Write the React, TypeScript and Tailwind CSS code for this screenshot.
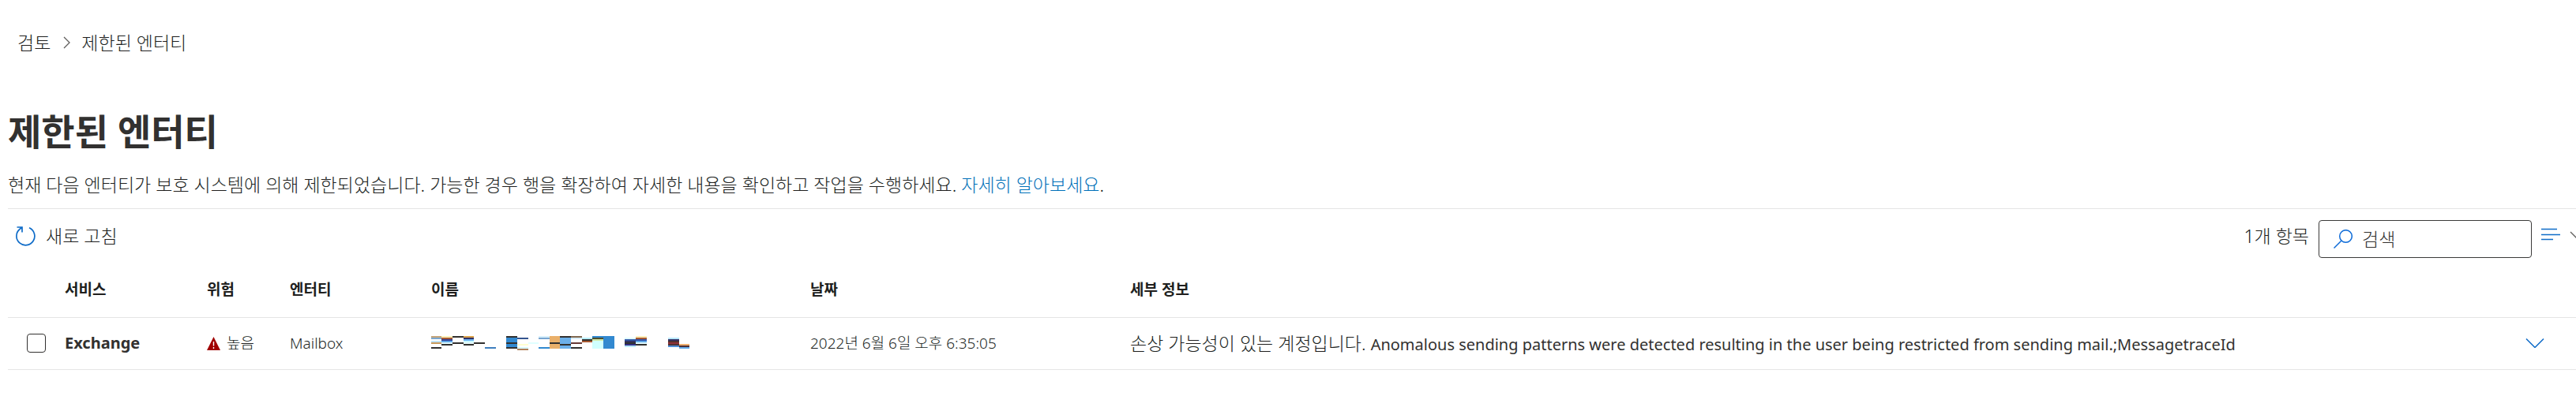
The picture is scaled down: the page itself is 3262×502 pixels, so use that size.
import { ReactNode } from 'react'

type Column = {
    title: string
    width: string
}

const columns: Column[] = [
    { title: '서비스', width: 'w-[180px]' },
    { title: '위험', width: 'w-[105px]' },
    { title: '엔터티', width: 'w-[179px]' },
    { title: '이름', width: 'w-[480px]' },
    { title: '날짜', width: 'w-[405px]' },
    { title: '세부 정보', width: '' },
]

// x, y, width, height and colour of every block of the masked name
const blocks: [number, number, number, number, string][] = [
    [0, 0, 13, 2, '#c4a57b'],
    [0, 2, 13, 2, '#7ba7d0'],
    [0, 6, 13, 2, '#bfe3ff'],
    [0, 8, 13, 2, '#c99a5b'],
    [0, 14, 13, 2, '#323130'],
    [13, 0, 14, 2, '#fff0b8'],
    [13, 2, 14, 2, '#a85a32'],
    [13, 4, 14, 2, '#323f94'],
    [13, 6, 14, 2, '#5fa8e8'],
    [13, 8, 14, 2, '#e0fbff'],
    [13, 10, 14, 2, '#323130'],
    [27, 0, 14, 2, '#323130'],
    [27, 8, 14, 2, '#323130'],
    [41, 0, 13, 2, '#dba24a'],
    [41, 2, 13, 2, '#323163'],
    [41, 4, 13, 2, '#68b0f0'],
    [41, 6, 13, 2, '#c8f8ff'],
    [41, 8, 13, 2, '#e8f8f8'],
    [41, 10, 13, 2, '#323130'],
    [54, 8, 14, 2, '#323130'],
    [68, 14, 14, 2, '#3f7fbf'],
    [95, 0, 14, 2, '#323130'],
    [95, 2, 14, 6, '#3289d0'],
    [95, 8, 14, 2, '#323130'],
    [95, 10, 14, 4, '#3289d0'],
    [95, 14, 14, 2, '#323130'],
    [109, 2, 14, 2, '#35558f'],
    [109, 10, 14, 2, '#ffffd0'],
    [109, 14, 14, 2, '#d8f8ff'],
    [109, 16, 14, 2, '#b08058'],
    [123, 8, 13, 2, '#e0ffff'],
    [136, 0, 14, 2, '#d8f0fc'],
    [136, 2, 14, 2, '#78a5d0'],
    [136, 14, 14, 2, '#3289d0'],
    [150, 0, 13, 16, '#eab06a'],
    [150, 8, 13, 2, '#323130'],
    [163, 0, 14, 16, '#6cb0ea'],
    [163, 0, 14, 2, '#323130'],
    [163, 10, 14, 2, '#323130'],
    [177, 0, 14, 2, '#806850'],
    [177, 2, 14, 2, '#d8ecf8'],
    [177, 8, 14, 2, '#683a36'],
    [177, 14, 14, 2, '#323130'],
    [191, 2, 13, 2, '#b8f0ff'],
    [191, 4, 13, 2, '#323130'],
    [191, 6, 13, 2, '#a85a32'],
    [204, 0, 14, 2, '#3289d0'],
    [204, 2, 14, 2, '#50502f'],
    [204, 4, 14, 2, '#d0e8a8'],
    [204, 6, 14, 10, '#d0ffff'],
    [218, 0, 14, 16, '#3289d0'],
    [245, 2, 14, 2, '#e0ffff'],
    [245, 4, 14, 2, '#3258a8'],
    [245, 6, 14, 2, '#323163'],
    [245, 8, 14, 2, '#323130'],
    [245, 10, 14, 2, '#323185'],
    [245, 12, 14, 2, '#b8e8ff'],
    [259, 0, 14, 2, '#ffeeb8'],
    [259, 2, 14, 2, '#a85a32'],
    [259, 4, 14, 2, '#3250a8'],
    [259, 6, 14, 2, '#5fa8e8'],
    [259, 8, 14, 2, '#e0fbff'],
    [259, 10, 14, 2, '#323130'],
    [300, 2, 14, 2, '#b8e8ff'],
    [300, 4, 14, 2, '#323163'],
    [300, 6, 14, 2, '#503030'],
    [300, 8, 14, 2, '#903035'],
    [300, 10, 14, 2, '#503035'],
    [300, 12, 14, 2, '#5090d8'],
    [314, 10, 13, 2, '#f0b070'],
    [314, 12, 13, 2, '#503035'],
    [314, 14, 13, 2, '#5fa8e8'],
]

const MaskedName = () => (
    <svg width="327" height="18" viewBox="0 0 327 18" shapeRendering="crispEdges" role="img">
        {blocks.map(([x, y, width, height, fill]) => (
            <rect key={`${x}-${y}-${height}`} x={x} y={y} width={width} height={height} fill={fill} />
        ))}
    </svg>
)

const LineIcon = ({ className, box, children }: { className: string; box: string; children: ReactNode }) => (
    <svg className={className} viewBox={box} fill="none" stroke="currentColor" aria-hidden="true">
        {children}
    </svg>
)

const Breadcrumb = () => (
    <nav className="flex h-8 items-center pl-3 pt-1">
        <a href="#review">검토</a>
        <LineIcon className="ml-4 mr-[14px] h-4 w-[9px] text-[#605e5c]" box="0 0 9 16">
            <path d="M1 1l7 7-7 7" strokeWidth="1.300" />
        </LineIcon>
        <span>제한된 엔터티</span>
    </nav>
)

const Toolbar = () => (
    <div className="flex items-start border-t border-[#e5e5e5] pb-[5px]">
        <button type="button" className="mt-4 flex h-9 items-center gap-3 pl-[10px]">
            <LineIcon className="h-[26px] w-[26px] text-[#0f6cc8]" box="0 0 26 26">
                <path d="M17 2.800A11.500 11.500 0 1 1 5 4.500" strokeWidth="1.700" />
                <path d="M1.500 2H8v6.500M8 2L5 4.500" strokeWidth="1.700" />
            </LineIcon>
            새로 고침
        </button>
        <span className="ml-auto mt-4 flex h-9 items-center">1개 항목</span>
        <label className="ml-3 mt-[14px] flex h-12 w-[270px] items-center rounded border border-[#3b3a39] pl-[18px]">
            <LineIcon className="h-6 w-6 shrink-0 text-[#0f6cd8]" box="0 0 24 24">
                <circle cx="15.500" cy="8.500" r="7.800" strokeWidth="1.500" />
                <path d="M10 14L.5 23.500" strokeWidth="1.500" />
            </LineIcon>
            <input
                type="search"
                placeholder="검색"
                aria-label="검색"
                className="ml-3 min-w-0 flex-1 outline-none placeholder:text-[#323130]"
            />
        </label>
        <button type="button" aria-label="보기" className="ml-3 mt-6 flex w-11 items-start overflow-hidden">
            <LineIcon className="h-4 w-6 shrink-0 text-[#0f6cc8]" box="0 0 24 16">
                <path d="M0 1.500h20M0 8.500h24M0 14.500h15" strokeWidth="1.500" />
            </LineIcon>
            <LineIcon className="ml-3 mt-1 h-3 w-[18px] shrink-0 text-[#605e5c]" box="0 0 18 12">
                <path d="M1 1l8 8 8-8" strokeWidth="1.300" />
            </LineIcon>
        </button>
    </div>
)

const EntityTable = () => (
    <table className="w-full table-fixed text-left text-[19px]">
        <thead>
            <tr className="h-[70px] border-b border-[#e5e5e5]">
                <th className="w-[72px]" aria-label="선택" />
                {columns.map((column) => (
                    <th key={column.title} className={`${column.width} font-bold`}>
                        {column.title}
                    </th>
                ))}
                <th className="w-[414px]" aria-label="확장" />
            </tr>
        </thead>
        <tbody>
            <tr className="h-[66px] border-b border-[#e5e5e5]">
                <td>
                    <input
                        type="checkbox"
                        aria-label="Exchange"
                        className="ml-6 block h-6 w-6 appearance-none rounded-sm border border-[#323130]"
                    />
                </td>
                <td className="text-xl font-bold text-[#323130]">Exchange</td>
                <td>
                    <span className="flex items-center gap-2">
                        <svg className="h-[17px] w-[17px]" viewBox="0 0 17 17" aria-hidden="true">
                            <path d="M8.500 0L17 17H0z" fill="#a00000" />
                            <path d="M8.500 6v5.500M8.500 13v2" stroke="#fff" strokeWidth="1.400" />
                        </svg>
                        높음
                    </span>
                </td>
                <td>Mailbox</td>
                <td>
                    <MaskedName />
                </td>
                <td>2022년 6월 6일 오후 6:35:05</td>
                <td className="overflow-hidden whitespace-nowrap text-[23px]">
                    손상 가능성이 있는 계정입니다.{' '}
                    <span className="text-xl font-normal text-[#323130]">
                        Anomalous sending patterns were detected resulting in the user being restricted from sending
                        mail.;MessagetraceId
                    </span>
                </td>
                <td>
                    <button type="button" aria-label="확장" className="ml-[350px] block">
                        <LineIcon className="h-3 w-6 text-[#0f6cc8]" box="0 0 24 12">
                            <path d="M1 .5l11 11 11-11" strokeWidth="1.500" />
                        </LineIcon>
                    </button>
                </td>
            </tr>
        </tbody>
    </table>
)

const App = () => (
    <div className="min-h-screen overflow-hidden bg-white pl-[10px] pt-9 font-['Noto_Sans','Noto_Sans_CJK_KR',sans-serif] text-[23px] leading-8 font-light text-[#201f1e]">
        <Breadcrumb />
        <h1 className="mt-[68px] text-[46px] leading-[60px] font-bold text-[#323130]">제한된 엔터티</h1>
        <p className="mt-[22px] mb-[14px]">
            현재 다음 엔터티가 보호 시스템에 의해 제한되었습니다. 가능한 경우 행을 확장하여 자세한 내용을 확인하고 작업을
            수행하세요.{' '}
            <a href="#learn-more" className="text-[#0070b8]">
                자세히 알아보세요
            </a>
            .
        </p>
        <Toolbar />
        <EntityTable />
    </div>
)

export default App
